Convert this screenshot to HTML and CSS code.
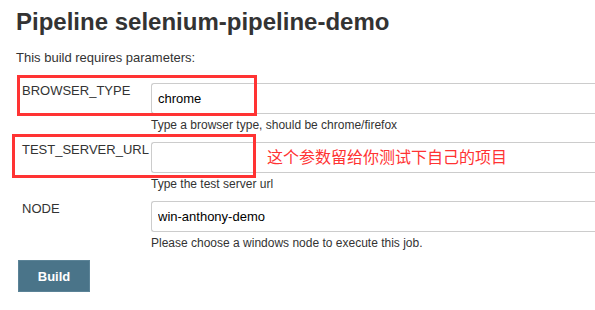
FILE: index.html
```html
<!DOCTYPE html>
<html lang="en">
<head>
  <meta charset="UTF-8">
  <title>Pipeline selenium-pipeline-demo</title>
  <link rel="stylesheet" href="styles.css">
</head>
<body>
  <main>
    <h1>Pipeline selenium-pipeline-demo</h1>
    <p class="intro">This build requires parameters:</p>

    <form class="params">
      <div class="param">
        <label>BROWSER_TYPE</label>
        <input type="text" value="chrome">
        <div class="desc">Type a browser type, should be chrome/firefox</div>
        <span class="mark mark-1"></span>
      </div>
      <div class="param">
        <label>TEST_SERVER_URL</label>
        <input type="text" value="">
        <div class="desc">Type the test server url</div>
        <span class="mark mark-2"></span>
        <span class="note">这个参数留给你测试下自己的项目</span>
      </div>
      <div class="param">
        <label>NODE</label>
        <input type="text" value="win-anthony-demo">
        <div class="desc">Please choose a windows node to execute this job.</div>
      </div>
      <button type="button" class="build">Build</button>
    </form>
  </main>
</body>
</html>
```

FILE: styles.css
```css
body {
  margin: 0;
  font-family: "Liberation Sans", Arial, sans-serif;
  color: #333;
  background: #fff;
  overflow: hidden;
}
main {
  padding: 0 0 0 16px;
}
h1 {
  margin: 0;
  padding-top: 8px;
  font-size: 24px;
  line-height: 28px;
  font-weight: bold;
}
.intro {
  margin: 14px 0 0;
  font-size: 13px;
  line-height: 16px;
}
.params {
  margin-top: 17px;
}
.param {
  position: relative;
  display: grid;
  grid-template-columns: 135px 1fr;
  margin-bottom: 9px;
}
.param label {
  padding: 0 0 0 6px;
  font-size: 13px;
  line-height: 15px;
}
.param input {
  box-sizing: border-box;
  height: 31px;
  width: 100%;
  margin: 0;
  padding: 0 6px;
  border: 1px solid #ccc;
  border-right: 0;
  border-radius: 3px 0 0 3px;
  font-family: inherit;
  font-size: 13px;
  color: #000;
  outline: none;
}
.desc {
  grid-column: 2;
  padding-top: 4px;
  font-size: 12px;
  line-height: 15px;
}
.mark {
  position: absolute;
  border: 3px solid #f33;
  box-sizing: border-box;
  pointer-events: none;
}
.mark-1 {
  left: 1px;
  top: -8px;
  width: 240px;
  height: 41px;
}
.mark-2 {
  left: -4px;
  top: -8px;
  width: 244px;
  height: 44px;
}
.note {
  position: absolute;
  left: 251px;
  top: 4px;
  font-family: "Noto Sans CJK SC", sans-serif;
  font-size: 16px;
  line-height: 20px;
  color: #f33;
}
.build {
  display: block;
  margin: 6px 0 0 2px;
  width: 72px;
  height: 32px;
  background: #4a7489;
  border: 1px solid #5b8397;
  color: #fff;
  font-family: inherit;
  font-size: 13px;
  font-weight: bold;
}
```
